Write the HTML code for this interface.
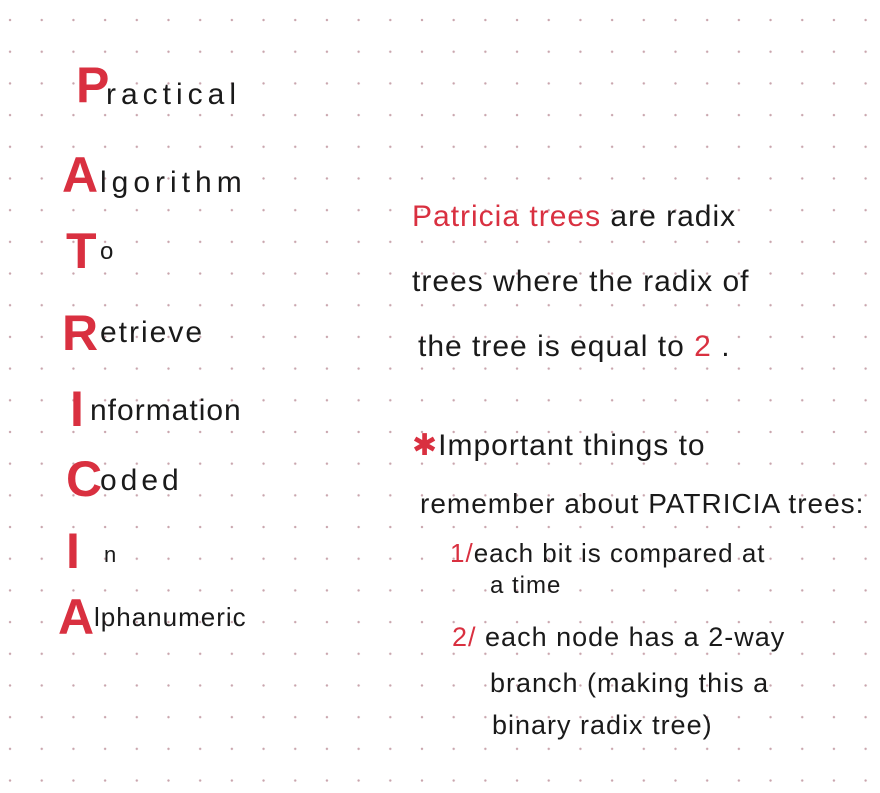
<!DOCTYPE html>
<html><head><style>
html,body{margin:0;padding:0}
body{width:880px;height:793px;position:relative;overflow:hidden;background-color:#fff;
background-image:radial-gradient(circle,#c9a5ad 1px,transparent 1.4px);
background-size:31.7px 31.7px;background-position:-5.8px 4.2px;
font-family:"Liberation Sans",sans-serif;color:#1a1a1a}
.t{position:absolute;white-space:nowrap}
.big{color:#d93040;font-weight:bold;font-size:50px}
.w{font-size:30px;letter-spacing:3px;font-family:"Liberation Sans Narrow","Liberation Sans",sans-serif}
.r{color:#d93040}
.n{font-size:30px;font-family:"Liberation Sans Narrow","Liberation Sans",sans-serif;letter-spacing:1px}
</style></head><body>
<div class="t big" style="left:76px;top:56px">P</div><div class="t w" style="left:106px;top:78px;letter-spacing:5px">ractical</div>
<div class="t big" style="left:62px;top:146px">A</div><div class="t w" style="left:100px;top:166px;letter-spacing:5px">lgorithm</div>
<div class="t big" style="left:66px;top:222px">T</div><div class="t w" style="left:100px;top:238px;font-size:24px">o</div>
<div class="t big" style="left:62px;top:304px">R</div><div class="t w" style="left:100px;top:316px;letter-spacing:2px">etrieve</div>
<div class="t big" style="left:70px;top:380px">I</div><div class="t w" style="left:90px;top:394px;letter-spacing:1px">nformation</div>
<div class="t big" style="left:66px;top:450px">C</div><div class="t w" style="left:100px;top:464px;letter-spacing:4px">oded</div>
<div class="t big" style="left:66px;top:522px">I</div><div class="t w" style="left:104px;top:542px;font-size:22px">n</div>
<div class="t big" style="left:58px;top:588px">A</div><div class="t w" style="left:94px;top:602px;font-size:26px;letter-spacing:1px">lphanumeric</div>

<div class="t n" style="left:412px;top:200px"><span class="r">Patricia trees</span> are radix</div>
<div class="t n" style="left:412px;top:265px">trees where the radix of</div>
<div class="t n" style="left:418px;top:330px">the tree is equal to <span class="r">2</span> .</div>
<div class="t n" style="left:412px;top:428px"><span class="r">✱</span>Important things to</div>
<div class="t n" style="left:420px;top:488px;font-size:28px">remember about PATRICIA trees:</div>
<div class="t n" style="left:450px;top:538px;font-size:26px"><span class="r">1/</span>each bit is compared at</div>
<div class="t n" style="left:490px;top:572px;font-size:24px">a time</div>
<div class="t n" style="left:452px;top:622px;font-size:27px"><span class="r">2/</span> each node has a 2-way</div>
<div class="t n" style="left:490px;top:668px;font-size:27px">branch (making this a</div>
<div class="t n" style="left:492px;top:710px;font-size:27px">binary radix tree)</div>
</body></html>
